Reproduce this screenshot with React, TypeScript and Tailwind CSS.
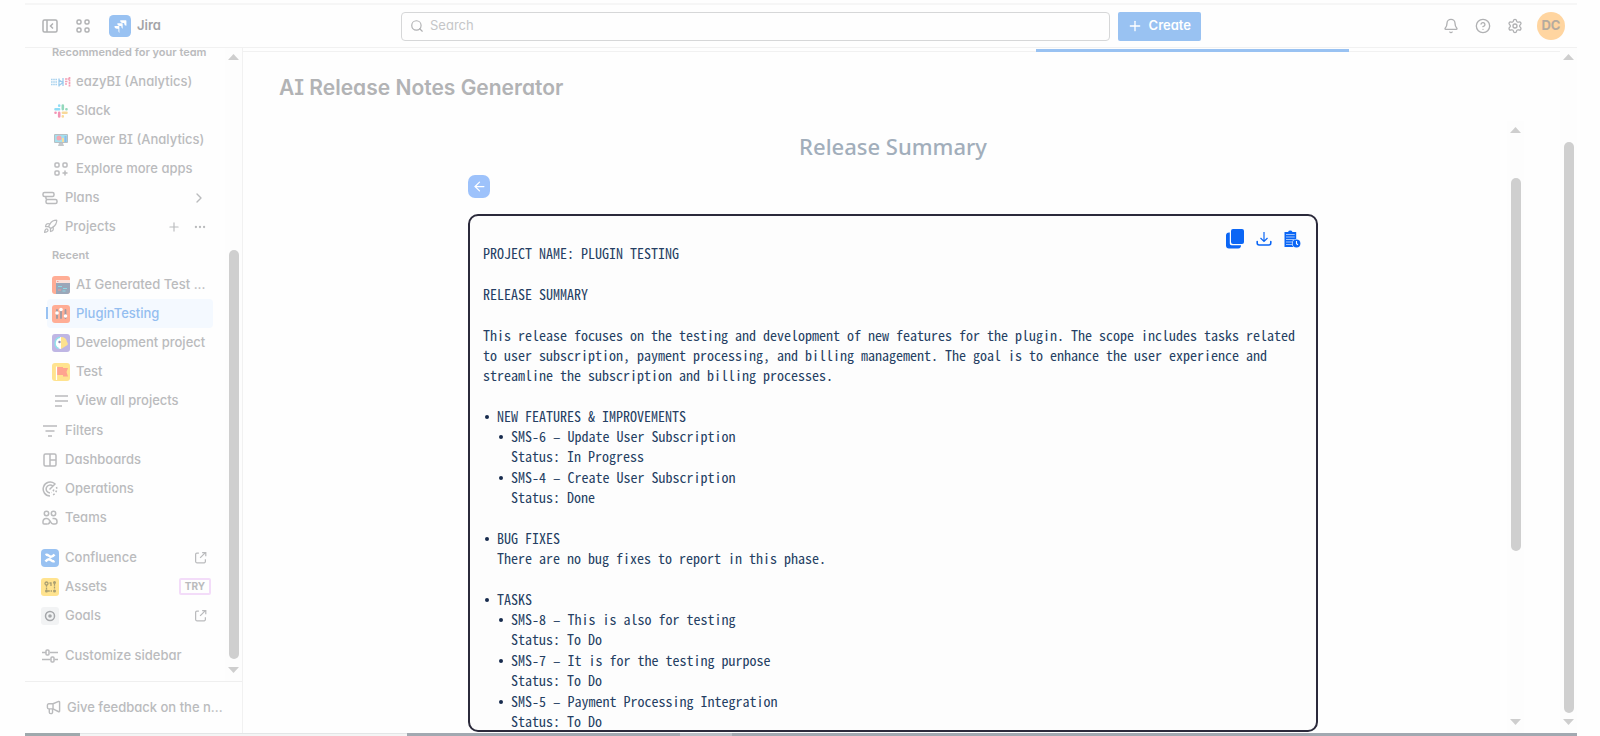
import type { ReactNode } from "react";
import clsx from "clsx";
import { ArrowLeft, Bell, ChevronRight, CircleHelp, Ellipsis, Plus, Rocket, Search, Settings } from "lucide-react";

const UI_FONT = "font-['Inter','Liberation_Sans',sans-serif] [font-feature-settings:'cv11','cv08']";

/* ---------- icons ---------- */

function LineIcon({ children, size = 16 }: { children: ReactNode; size?: number }) {
  return (
    <svg width={size} height={size} viewBox="0 0 16 16" fill="none" stroke="currentColor" strokeWidth="1.5" aria-hidden="true">
      {children}
    </svg>
  );
}

const PanelIcon = () => (
  <LineIcon>
    <rect x="1" y="2" width="14" height="12" rx="1.5" />
    <path d="M5 2v12M11 5.5 8.5 8l2.500 2.500" />
  </LineIcon>
);

const AppsIcon = () => (
  <LineIcon>
    <rect x="2" y="2" width="4" height="4" rx="1.500" />
    <rect x="10" y="2" width="4" height="4" rx="1.500" />
    <rect x="2" y="10" width="4" height="4" rx="1.500" />
    <rect x="10" y="10" width="4" height="4" rx="1.500" />
  </LineIcon>
);

const MoreAppsIcon = () => (
  <LineIcon>
    <rect x="2" y="2" width="4" height="4" rx="1" />
    <rect x="10" y="2" width="4" height="4" rx="1" />
    <rect x="2" y="10" width="4" height="4" rx="1" />
    <path d="M12 9.500v5M9.500 12h5" />
  </LineIcon>
);

const PlansIcon = () => (
  <LineIcon>
    <rect x="1" y="2.500" width="11" height="4" rx="1.500" />
    <rect x="4" y="9.500" width="11" height="4" rx="1.500" />
    <path d="M4 6.500q-.5 2.500 1 3" />
  </LineIcon>
);

const ListIcon = () => (
  <LineIcon>
    <path d="M2 3h13M2 8h13M2 13h7" />
  </LineIcon>
);

const FilterIcon = () => (
  <LineIcon>
    <path d="M1 3h14M3.500 8h9M6 13h4" />
  </LineIcon>
);

const DashboardIcon = () => (
  <LineIcon>
    <rect x="2" y="2" width="12" height="12" rx="1.500" />
    <path d="M8 2v12M8 8h6" />
  </LineIcon>
);

const OperationsIcon = () => (
  <LineIcon>
    <path d="M12.500 2.500A7 7 0 1 0 8 15M10.800 5A4 4 0 1 0 8 12M7.500 8.500 13.500 2.500" />
    <path d="M14.500 6a7 7 0 0 1-5 8.500M11.800 8.500a4 4 0 0 1-2.500 3" strokeDasharray="1.800 1.800" />
  </LineIcon>
);

const TeamsIcon = () => (
  <LineIcon>
    <circle cx="4.500" cy="3.500" r="2.200" />
    <circle cx="11.500" cy="3.500" r="2.200" />
    <path d="M5.500 14H2a1 1 0 0 1-1-1v-1.500a3 3 0 0 1 3-3h1c1.500 0 2 .8 3 2.500s1.500 3 3 3h2a2 2 0 0 0 2-2v-.5a3 3 0 0 0-3-3h-1.500" />
    <path d="M7.500 11.500V12a2 2 0 0 1-2 2" />
  </LineIcon>
);

const SlidersIcon = () => (
  <LineIcon>
    <path d="M0 4.500h4M8 4.500h8M0 11.500h8.500M12.500 11.500H16" />
    <rect x="4" y="2" width="3" height="5" rx="1" />
    <rect x="9" y="9" width="3" height="5" rx="1" />
  </LineIcon>
);

const MegaphoneIcon = () => (
  <LineIcon size={15}>
    <path d="M7.500 4H3a1.500 1.500 0 0 0-1.500 1.500V8A1.500 1.500 0 0 0 3 9.500h4.500V4zM7.500 4l6-2.500a.8.8 0 0 1 1 .8v9.400a.8.8 0 0 1-1 .8l-6-3" />
    <path d="M3.500 9.500V13a1.500 1.500 0 0 0 1.500 1.500h.5A1.500 1.500 0 0 0 7 13V9.500" />
  </LineIcon>
);

const ExternalIcon = () => (
  <LineIcon size={13}>
    <path d="M6 2.500H3.500A1.500 1.500 0 0 0 2 4v9a1.500 1.500 0 0 0 1.500 1.500h9A1.500 1.500 0 0 0 14 13v-3M10 2h4.500v4.500M14 2 7.500 8.500" />
  </LineIcon>
);

const JiraLogo = () => (
  <svg width="22" height="22" viewBox="0 0 24 24" aria-hidden="true">
    <rect width="24" height="24" rx="5" fill="#99c2f2" />
    <path
      fill="#fff"
      d="M10.300 15H9a2.900 2.900 0 0 1-3-3h0 -1.500 6.200a.6.6 0 0 1 .6.600v7a2.900 2.900 0 0 1-1-2.200zM13.400 11.900h-1.300a2.900 2.900 0 0 1-3-3h5.200a.6.6 0 0 1 .6.600v5.400a2.900 2.900 0 0 1-1.500-2.600zM16.500 8.800h-1.300a2.900 2.900 0 0 1-3-3h6.200a.6.600 0 0 1 .6.600v5.400a2.900 2.900 0 0 1-2.500-2.600z"
    />
  </svg>
);

const EazyLogo = () => (
  <svg width="20" height="10" viewBox="0 0 20 10" aria-hidden="true">
    <path stroke="#a9d2ee" strokeWidth="1.600" strokeDasharray="1.600 .6" d="M0 2.500h6M0 5h6M0 7.500h6" />
    <path stroke="#9ccbec" strokeWidth="1.300" fill="none" d="M8 1.500v8M8 3l4 2.500-4 3M12 1v8" />
    <path stroke="#f4a0b5" strokeWidth="1.700" strokeDasharray="2 .5" d="M14 2h5M14 4.500h3M18.500 0v10M14 7h2" />
  </svg>
);

const SlackLogo = () => (
  <svg width="14" height="14" viewBox="0 0 14 14" strokeWidth="2.600" strokeLinecap="round" aria-hidden="true">
    <path stroke="#8fdcf5" d="M1.500 5.200h3.600M5.200 1.500v.2" />
    <path stroke="#93d8bb" d="M8.800 1.500v3.600M12.400 5.200h.1" />
    <path stroke="#f8d999" d="M8.900 8.800h3.600M8.800 12.400v.1" />
    <path stroke="#f295b5" d="M5.200 8.900v3.600M1.500 8.800h.1" />
  </svg>
);

const PowerBiLogo = () => (
  <svg width="14" height="14" viewBox="0 0 14 14" aria-hidden="true">
    <rect x="0" y="1" width="14" height="9" rx="1" fill="#b6bfc4" />
    <rect x="1" y="2" width="12" height="7" fill="#a5e0ee" />
    <circle cx="5" cy="5" r="2.500" fill="#f2a9b4" />
    <path fill="#f6dc9c" d="M8 5h2v4H8z" />
    <path fill="#8fbde8" d="M10.500 3h2v6h-2z" />
    <path fill="#c4c7ca" d="M5 10h4l1 3H4z" />
  </svg>
);

const TerminalAvatar = () => (
  <svg width="18" height="18" viewBox="0 0 18 18" aria-hidden="true">
    <rect width="18" height="18" rx="3" fill="#ffad95" />
    <path fill="#fbe0d8" d="M4 4h14v4H4z" />
    <path fill="#9aa7b9" d="M4 7h14v8a3 3 0 0 1-3 3H4z" />
    <path stroke="#f59b98" strokeWidth="1.200" d="M5 5.500h1.500M6 14h3" />
    <path stroke="#8cd9e5" strokeWidth="1.200" d="M6 10.500h4M11 12.500h4M10.500 15h3" />
  </svg>
);

const SlidersAvatar = () => (
  <svg width="18" height="18" viewBox="0 0 18 18" aria-hidden="true">
    <rect width="18" height="18" rx="3" fill="#ffad95" />
    <path stroke="#9c9ba5" strokeWidth="1.800" strokeLinecap="round" d="M5 5v8M9 4v9M13.500 5v8" />
    <g fill="#fff">
      <circle cx="5" cy="8" r="1.800" />
      <circle cx="9" cy="4.500" r="1.800" />
      <circle cx="13.500" cy="11" r="1.800" />
    </g>
  </svg>
);

const ParrotAvatar = () => (
  <svg width="18" height="18" viewBox="0 0 18 18" aria-hidden="true">
    <rect width="18" height="18" rx="3" fill="#bfb6e4" />
    <path fill="#fff" d="M9 3a6 6 0 0 0 0 12z" />
    <path fill="#fde18e" d="M9 3a6 6 0 0 1 6 5c1 1 1 2 .5 3L9 15z" />
    <path stroke="#8fe1ea" strokeWidth="1.500" fill="none" d="M8 3.200a6 6 0 0 0-1.500 11.300" />
    <circle cx="7.500" cy="8" r="1.200" fill="#8f87b5" />
  </svg>
);

const FlagAvatar = () => (
  <svg width="18" height="18" viewBox="0 0 18 18" aria-hidden="true">
    <rect width="18" height="18" rx="3" fill="#ffe38f" />
    <path fill="#ffa48f" d="M5 4h6v1h5l-1.500 4 1.500 4.500h-5V12H5z" />
    <path stroke="#fff" strokeWidth="1.200" d="M4.500 3.500V17" />
  </svg>
);

const ConfluenceLogo = () => (
  <svg width="18" height="18" viewBox="0 0 18 18" aria-hidden="true">
    <rect width="18" height="18" rx="4" fill="#99c2f2" />
    <path
      stroke="#fff"
      strokeWidth="2.500"
      fill="none"
      d="M4.500 6c2-1.200 3 .8 4.500 1.500s2.500.5 4.500-2M13.500 12c-2 1.200-3-.8-4.500-1.500s-2.500-.5-4.500 2"
    />
  </svg>
);

const AssetsLogo = () => (
  <svg width="18" height="18" viewBox="0 0 18 18" fill="none" stroke="#a99e72" aria-hidden="true">
    <rect width="18" height="18" rx="3" fill="#ffe38f" stroke="none" />
    <circle cx="5.500" cy="5.500" r="1.500" strokeWidth="1.300" />
    <path strokeWidth="1.300" d="M5.500 7v5M7 13h4M13.500 6v5" strokeDasharray="1.800 .8" />
    <path strokeWidth="3" strokeLinecap="round" d="M13.500 4.500v.1M13.500 13v.1M5.500 13v.1" />
    <path strokeWidth="1.300" d="M8.500 5h1.500v3" />
  </svg>
);

const GoalsLogo = () => (
  <svg width="18" height="18" viewBox="0 0 18 18" fill="none" aria-hidden="true">
    <rect width="18" height="18" rx="3" fill="#f2f3f4" />
    <circle cx="9" cy="9" r="4.500" stroke="#a5a7aa" strokeWidth="1.500" />
    <circle cx="9" cy="9" r="1.800" fill="#a5a7aa" />
  </svg>
);

const CopyIcon = () => (
  <svg width="20" height="20" viewBox="0 0 20 20" fill="currentColor" aria-hidden="true">
    <rect x="6" y="0" width="13" height="15" rx="2" />
    <path d="M4.800 3.500v11a1.800 1.800 0 0 0 1.800 1.800h9.400a3 3 0 0 1-2.800 3.200H4a3 3 0 0 1-3-3v-10a3 3 0 0 1 3.800-3z" />
  </svg>
);

const DownloadIcon = () => (
  <svg width="16" height="16" viewBox="0 0 16 16" fill="none" stroke="currentColor" aria-hidden="true">
    <path strokeWidth="1.200" d="M8 1v9.500M4.500 7 8 10.500 11.500 7" />
    <path strokeWidth="1.600" strokeLinecap="round" d="M1.200 10.500V12a2 2 0 0 0 2 2h9.600a2 2 0 0 0 2-2v-1.500" />
  </svg>
);

const ClipboardClockIcon = () => (
  <svg width="18" height="18" viewBox="0 0 18 18" aria-hidden="true">
    <path fill="currentColor" d="M1.500 2H5a2.500 2.500 0 0 1 4.500 0h3.700v15H1.500z" />
    <path stroke="#fff" strokeWidth=".6" d="M3 4.500h8.700M3 7h8.700M3 9.500h8M3 12h6M3 14.500h6" />
    <circle cx="13.500" cy="13.500" r="4.600" fill="#fdfdfd" />
    <circle cx="13.500" cy="13.500" r="3.900" fill="currentColor" />
    <path stroke="#fff" strokeWidth="1.100" fill="none" d="M13.500 11v2.800l1.500 1" />
  </svg>
);

/* ---------- scrollbar ---------- */

type ScrollbarProps = { before: number; thumb: number; after: number };

function Scrollbar({ before, thumb, after }: ScrollbarProps) {
  return (
    <div className="flex flex-col items-center shrink-0 w-[17px] pt-[6px] pb-2 bg-[#fdfdfd]" aria-hidden="true">
      <svg width="11" height="6" viewBox="0 0 11 6" fill="#cecece">
        <path d="M5.500 0 11 6H0z" />
      </svg>
      <div style={{ flexGrow: before }} />
      <div className="w-[10px] rounded-full bg-[#cfcfcf]" style={{ flexGrow: thumb }} />
      <div style={{ flexGrow: after }} />
      <svg width="11" height="6" viewBox="0 0 11 6" fill="#cecece">
        <path d="M5.500 6 11 0H0z" />
      </svg>
    </div>
  );
}

/* ---------- sidebar ---------- */

type NavItemProps = { icon: ReactNode; label: string; nested?: boolean; active?: boolean; children?: ReactNode };

function NavItem({ icon, label, nested, active, children }: NavItemProps) {
  return (
    <li className={clsx("relative flex items-center h-[29px] pr-[6px]", active && "text-[#94bef0]")}>
      {active && (
        <>
          <span className="absolute inset-y-0 left-[22px] right-0 rounded bg-[#f4f9ff]" />
          <span className="absolute left-[21px] top-2 h-3 w-[2px] bg-[#99c2f2]" />
        </>
      )}
      <a href="#" className={clsx("relative flex items-center gap-[5px] whitespace-nowrap", nested ? "pl-[26px]" : "pl-[15px]")}>
        <span className="flex w-5 justify-center shrink-0">{icon}</span>
        {label}
      </a>
      {children && <span className="ml-auto flex items-center gap-3">{children}</span>}
    </li>
  );
}

function NavHeading({ children }: { children: ReactNode }) {
  return <h2 className="flex items-center h-[29px] pl-[27px] text-[11px] font-semibold whitespace-nowrap">{children}</h2>;
}

function Sidebar() {
  return (
    <aside className="flex flex-col w-[218px] shrink-0 border-r border-[#f1f1f1] text-[13px] font-medium text-[#babbbd]">
      <div className="flex flex-1 min-h-0 border-b border-[#efefef]">
        <nav className="flex-1 min-w-0 overflow-hidden pr-3">
          <div className="-mt-[10px]">
            <NavHeading>Recommended for your team</NavHeading>
            <ul>
              <NavItem nested icon={<EazyLogo />} label="eazyBI (Analytics)" />
              <NavItem nested icon={<SlackLogo />} label="Slack" />
              <NavItem nested icon={<PowerBiLogo />} label="Power BI (Analytics)" />
              <NavItem nested icon={<MoreAppsIcon />} label="Explore more apps" />
              <NavItem icon={<PlansIcon />} label="Plans">
                <ChevronRight size={16} />
              </NavItem>
              <NavItem icon={<Rocket size={15} />} label="Projects">
                <button type="button" aria-label="Create project"><Plus size={14} /></button>
                <button type="button" aria-label="More project actions"><Ellipsis size={14} /></button>
              </NavItem>
            </ul>
            <NavHeading>Recent</NavHeading>
            <ul>
              <NavItem nested icon={<TerminalAvatar />} label="AI Generated Test ..." />
              <NavItem nested active icon={<SlidersAvatar />} label="PluginTesting" />
              <NavItem nested icon={<ParrotAvatar />} label="Development project" />
              <NavItem nested icon={<FlagAvatar />} label="Test" />
              <NavItem nested icon={<ListIcon />} label="View all projects" />
            </ul>
            <ul className="mt-px">
              <NavItem icon={<FilterIcon />} label="Filters" />
              <NavItem icon={<DashboardIcon />} label="Dashboards" />
              <NavItem icon={<OperationsIcon />} label="Operations" />
              <NavItem icon={<TeamsIcon />} label="Teams" />
            </ul>
            <ul className="mt-[11px]">
              <NavItem icon={<ConfluenceLogo />} label="Confluence"><ExternalIcon /></NavItem>
              <NavItem icon={<AssetsLogo />} label="Assets">
                <span className="-mr-1 rounded-xs border-2 border-[#f3dcf9] px-1 text-[10px] leading-[13px] font-bold">TRY</span>
              </NavItem>
              <NavItem icon={<GoalsLogo />} label="Goals"><ExternalIcon /></NavItem>
            </ul>
            <ul className="mt-[11px]">
              <NavItem icon={<SlidersIcon />} label="Customize sidebar" />
            </ul>
          </div>
        </nav>
        <Scrollbar before={190} thumb={410} after={8} />
      </div>
      <button type="button" className="flex items-center gap-[6px] h-[51px] pl-[21px] whitespace-nowrap">
        <MegaphoneIcon />
        Give feedback on the n...
      </button>
    </aside>
  );
}

/* ---------- header ---------- */

function Header() {
  return (
    <header className="flex items-center h-[45px] mt-[3px] shrink-0 border-t-2 border-b border-t-[#f6f6f6] border-b-[#f1f1f1] text-[#b0b1b3]">
      <div className="flex items-center w-[376px] pl-[17px]">
        <button type="button" aria-label="Collapse sidebar"><PanelIcon /></button>
        <button type="button" aria-label="Switch apps" className="ml-[17px]"><AppsIcon /></button>
        <a href="#" className="flex items-center gap-[6px] ml-[18px] text-[13px] font-semibold text-[#a3a4a7]">
          <JiraLogo />
          Jira
        </a>
      </div>
      <label className="flex items-center flex-1 h-[29px] px-2 gap-[6px] rounded border border-[#d6d7d8]">
        <Search size={14} className="shrink-0" />
        <input type="search" placeholder="Search" aria-label="Search" className="w-full text-[13px] outline-none placeholder:text-[#c5c6c8]" />
      </label>
      <button type="button" className="flex items-center gap-[6px] h-[29px] ml-2 pl-[9px] pr-[10px] rounded-xs bg-[#99c2f2] text-white text-[13px] font-semibold">
        <Plus size={16} />
        Create
      </button>
      <div className="flex items-center w-[376px] justify-end gap-4 pr-3">
        <button type="button" aria-label="Notifications"><Bell size={16} /></button>
        <button type="button" aria-label="Help"><CircleHelp size={16} /></button>
        <button type="button" aria-label="Settings"><Settings size={16} /></button>
        <button type="button" className="-ml-[2px] size-[28px] rounded-full bg-[#ffd5a0] text-[13px] font-bold text-[#b5ab9e]">DC</button>
      </div>
    </header>
  );
}

/* ---------- release notes ---------- */

type Task = { title: string; status: string };
type Section = { name: string; note?: string; tasks?: Task[] };

const SECTIONS: Section[] = [
  {
    name: "NEW FEATURES & IMPROVEMENTS",
    tasks: [
      { title: "SMS-6 – Update User Subscription", status: "In Progress" },
      { title: "SMS-4 – Create User Subscription", status: "Done" },
    ],
  },
  { name: "BUG FIXES", note: "There are no bug fixes to report in this phase." },
  {
    name: "TASKS",
    tasks: [
      { title: "SMS-8 – This is also for testing", status: "To Do" },
      { title: "SMS-7 – It is for the testing purpose", status: "To Do" },
      { title: "SMS-5 – Payment Processing Integration", status: "To Do" },
    ],
  },
];

const Bullet = () => <span className="absolute left-[2px] top-[9px] size-1 rounded-full bg-[#172b4d]" />;

function ReleaseNotes() {
  return (
    <article className="relative flex-1 min-h-0 overflow-hidden rounded-[10px] border-2 border-[#2b2a3b] bg-[#fdfdfd] pl-[13px] pr-4 pt-[27px] font-['Noto_Sans_Mono_CJK_SC','Liberation_Mono',monospace] text-[14px] leading-[20px] text-[#253f63]">
      <div className="absolute right-[15px] top-[13px] flex items-center gap-[11px] text-[#0b66f5]">
        <button type="button" aria-label="Copy"><CopyIcon /></button>
        <button type="button" aria-label="Download"><DownloadIcon /></button>
        <button type="button" aria-label="Save to history"><ClipboardClockIcon /></button>
      </div>
      <div className="flex flex-col gap-[21px]">
        <p>PROJECT NAME: PLUGIN TESTING</p>
        <p>RELEASE SUMMARY</p>
        <p>
          This release focuses on the testing and development of new features for the plugin. The scope includes tasks related
          to user subscription, payment processing, and billing management. The goal is to enhance the user experience and
          streamline the subscription and billing processes.
        </p>
        {SECTIONS.map((section) => (
          <section key={section.name} className="relative pl-[14px]">
            <Bullet />
            <h3>{section.name}</h3>
            {section.note && <p>{section.note}</p>}
            {section.tasks && (
              <ul className="flex flex-col gap-px">
                {section.tasks.map((task) => (
                  <li key={task.title} className="relative pl-[14px]">
                    <Bullet />
                    <p>{task.title}</p>
                    <p>Status: {task.status}</p>
                  </li>
                ))}
              </ul>
            )}
          </section>
        ))}
      </div>
    </article>
  );
}

function MainPanel() {
  return (
    <main className="relative flex flex-1 min-w-0">
      <div className="absolute left-[793px] top-px z-10 h-[3px] w-[313px] bg-[#99c2f2]" />
      <div className="flex flex-col flex-1 min-w-0 mt-[3px] border-t border-[#f1f1f1] pl-9 pr-9">
        <h1 className="pt-[22px] text-[21px] leading-7 font-semibold text-[#b2b3b5]">AI Release Notes Generator</h1>
        <div className="flex flex-1 min-h-0 mt-[19px]">
          <div className="flex flex-col flex-1 min-w-0 items-center pb-px">
            <div className="flex flex-col flex-1 min-h-0 w-full max-w-[850px]">
              <h2 className="pt-[9px] text-center font-['Noto_Sans','Open_Sans',sans-serif] text-[22px] leading-8 font-medium text-[#a2aebb]">
                Release Summary
              </h2>
              <button
                type="button"
                aria-label="Back"
                className="flex items-center justify-center mt-[13px] mb-4 w-[22px] h-[23px] shrink-0 rounded-[7px] bg-[#9dc2fb] text-white"
              >
                <ArrowLeft size={15} />
              </button>
              <ReleaseNotes />
            </div>
          </div>
          <Scrollbar before={45} thumb={373} after={168} />
        </div>
      </div>
      <Scrollbar before={82} thumb={572} after={6} />
    </main>
  );
}

export default function App() {
  return (
    <div className={clsx("flex flex-col h-screen overflow-hidden bg-[#fefefe] pl-[25px] pr-[23px]", UI_FONT)}>
      <Header />
      <div className="flex flex-1 min-h-0">
        <Sidebar />
        <MainPanel />
      </div>
      <div className="flex h-[3px] shrink-0 bg-[#a2a9b1]">
        <div className="w-[55px] bg-[#9fa9ad]" />
        <div className="w-[327px] border-t border-[#e3e6e7] bg-[#f4f5f5]" />
        <div className="w-[273px]" />
        <div className="w-[52px] bg-[#b9bec4]" />
      </div>
    </div>
  );
}
